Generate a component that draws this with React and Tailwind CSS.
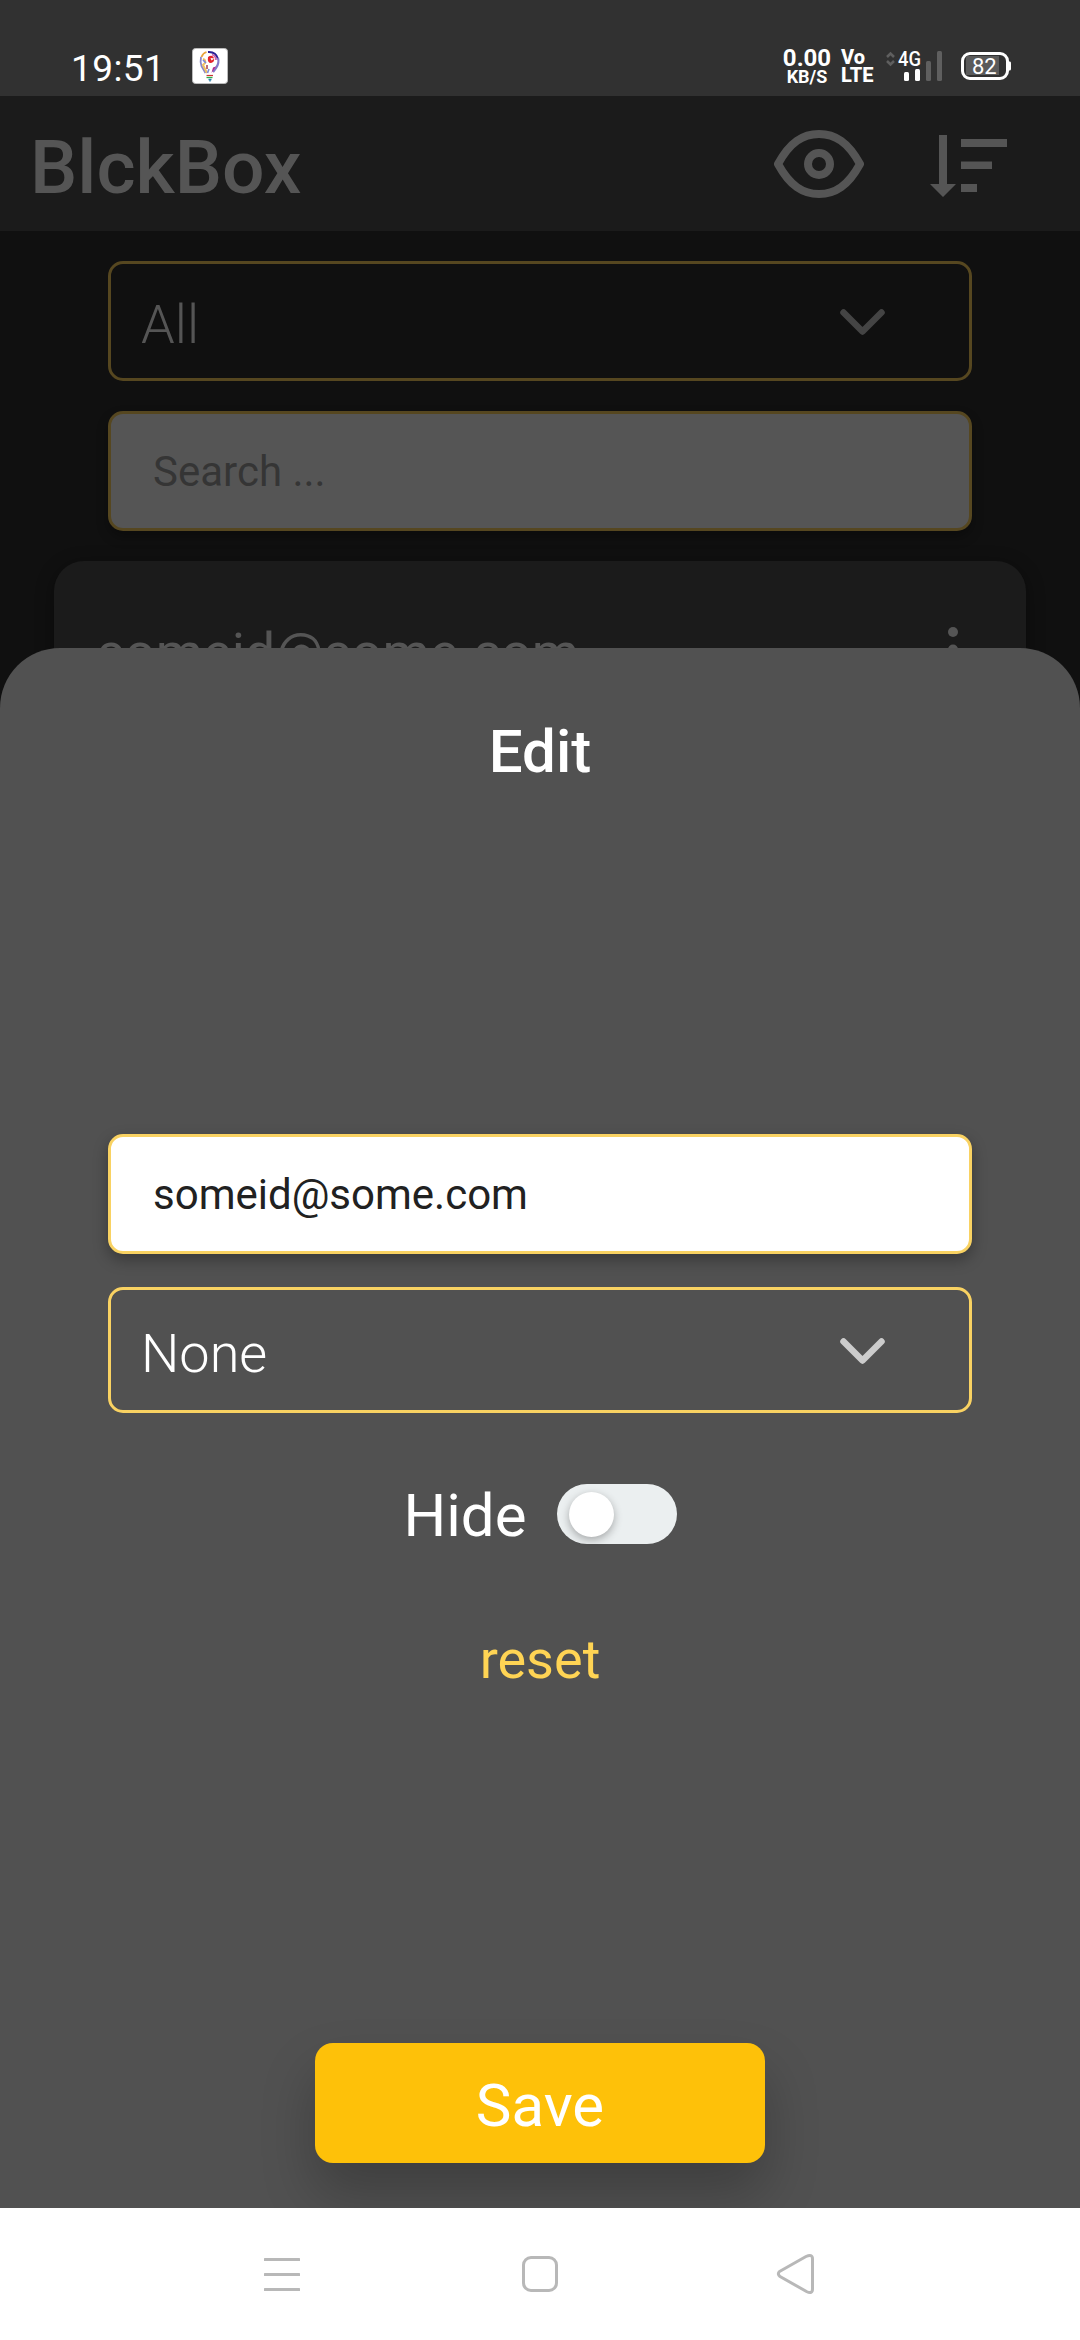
import React from "react";

const selectFont = "text-[54px] font-light leading-none";

function StatusBar() {
  return (
    <div className="flex h-24 w-full shrink-0 items-start bg-[#313131] pt-[48px] text-white">
      <div className="ml-[71px] mt-[2px] w-[96px] whitespace-nowrap text-[37px] leading-[38px] tracking-[0.4px] font-['Roboto']">19:51</div>
      <svg className="ml-[25px] h-9 w-9" viewBox="0 0 36 36" fill="none">
        <rect x="0.5" y="0.5" width="35" height="35" rx="3" fill="#fff" stroke="#bbb" strokeWidth="1" />
        <path d="M9 9Q8 14 9.500 18L13.500 25" stroke="#8a86c8" strokeWidth="1.800" />
        <path d="M9.500 9Q11 5 14.500 4" stroke="#e8a33a" strokeWidth="1.800" />
        <path d="M11 11q3 1 2 4l-2 2 4 8" stroke="#f0c060" strokeWidth="2" />
        <path d="M11 12l3 3" stroke="#7a86d8" strokeWidth="1.600" />
        <path d="M16 4Q24 3.500 26 11" stroke="#2a1f96" strokeWidth="2" />
        <path d="M20 6.500Q24 8 24 12" stroke="#c765b0" strokeWidth="1.800" />
        <path d="M26 10Q27.500 15 24 20L21 24" stroke="#8378c9" strokeWidth="2.200" />
        <path d="M16 9q4-3 6 1 1 4-3 5-4 0-3-6z" fill="#e4242c" />
        <path d="M18.500 10l4 0.500-3 2z" fill="#fff" />
        <path d="M19.500 25l1.500-5.500 3-1z" fill="#b0218c" />
        <path d="M15 17v4" stroke="#a03040" strokeWidth="1.400" />
        <path d="M17 21l-1.500 4" stroke="#7a86d8" strokeWidth="1.600" />
        <path d="M14.500 27.500h6.500" stroke="#c33" strokeWidth="1.200" />
        <path d="M14.500 29.500h6" stroke="#2fae4a" strokeWidth="1.300" />
        <path d="M16.500 31.500h3M18 31.500v2" stroke="#2a7fa8" strokeWidth="1.400" />
      </svg>
      <div className="ml-[550px] flex w-[58px] flex-col items-center font-bold font-['Roboto']">
        <span className="text-[24px] leading-[20px]">0.00</span>
        <span className="text-[18px] leading-[18px]">KB/S</span>
      </div>
      <div className="ml-[5px] flex w-[36px] flex-col font-extrabold font-['Roboto']">
        <span className="text-[20px] leading-[18px]">Vo</span>
        <span className="text-[20px] leading-[18px]">LTE</span>
      </div>
      <svg className="ml-[7px] h-9 w-[62px]" viewBox="884 48 62 36">
        <path d="M887 57l3.500-3.500 3.500 3.500M887 61l3.500 3.500 3.500-3.500" fill="none" stroke="#5f5f5f" strokeWidth="2.500" />
        <text x="898" y="65.500" fill="#fff" fontSize="20" fontWeight="500" fontFamily="Roboto" textLength="23" lengthAdjust="spacingAndGlyphs">4G</text>
        <rect x="904" y="72" width="5" height="9" rx="1.500" fill="#fff" />
        <rect x="915" y="69" width="5" height="12" rx="1.500" fill="#fff" />
        <rect x="926" y="61" width="5" height="20" rx="1.500" fill="#5f5f5f" />
        <rect x="937" y="51" width="5" height="30" rx="1.500" fill="#5f5f5f" />
      </svg>
      <svg className="ml-[14px] h-9 w-[54px]" viewBox="960 48 54 36">
        <rect x="962.500" y="53.500" width="45" height="25" rx="7.500" fill="none" stroke="#fff" strokeWidth="3" />
        <path d="M966 56h33v19h-33z" fill="#5a5a5a" />
        <path d="M1009 61.500h1q1 0 1 2v5q0 2-1 2h-1z" fill="#fff" />
        <text x="972" y="74" fill="#fff" fontSize="22" fontFamily="Roboto">82</text>
      </svg>
    </div>
  );
}

function Header() {
  return (
    <header className="flex h-[135px] shrink-0 items-center bg-[#1b1b1b] text-[#555]">
      <h1 className="ml-[30px] w-[744px] pt-[8px] text-[75px] font-medium leading-none">BlckBox</h1>
      <svg className="h-[68px] w-[90px]" viewBox="774 129 90 68" fill="none" stroke="currentColor" strokeWidth="8">
        <path d="M778 163C790 141 803 133 819 133S848 141 860 163C848 185 835 193 819 193S790 185 778 163Z" strokeLinejoin="round" />
        <circle cx="819" cy="163" r="11" />
      </svg>
      <svg className="ml-[66px] mt-[5px] h-[62px] w-[78px]" viewBox="930 135 78 62" fill="currentColor">
        <path d="M939 135h8v49h9l-13 13-13-13h9zM961 139h46v8h-46zM961 161.500h31v7.500h-31zM961 184h16v8h-16z" />
      </svg>
    </header>
  );
}

function Chevron({ className }) {
  return (
    <svg className={className} viewBox="0 0 45 26" fill="none" stroke="currentColor" strokeWidth="6.500" strokeLinecap="round" strokeLinejoin="round">
      <path d="M3.500 3.500 22.500 22.500 41.500 3.500" />
    </svg>
  );
}

export default function App() {
  return (
    <div className="relative flex h-[2340px] w-[1080px] flex-col overflow-hidden bg-[#101010] font-['Roboto',sans-serif]">
      <StatusBar />
      <Header />
      <main className="flex flex-col px-[54px] pt-[30px]">
        <div className="mx-[54px] flex h-[120px] items-center justify-between rounded-[15px] border-[3px] border-[#564720] pl-[30px] pr-[84px] text-[#555]">
          <span className={`${selectFont} pt-[8px]`}>All</span>
          <Chevron className="mt-[2px] h-[26px] w-[45px] text-[#444]" />
        </div>
        <div className="mx-[54px] mt-[30px] flex h-[120px] items-center rounded-[15px] border-[3px] border-[#564720] bg-[#555] pl-[42px] shadow-[0_6px_12px_rgba(0,0,0,0.3)]">
          <span className="pt-[2px] text-[42px] leading-none text-[#353535]">Search ...</span>
        </div>
        <div className="mt-[30px] flex h-[240px] items-start justify-between rounded-[30px] bg-[#1b1b1b] pl-[43px] pr-[68px] pt-[60px] text-[#555] shadow-[0_4px_18px_rgba(0,0,0,0.4)]">
          <span className="text-[54px] leading-[63px]">someid@some.com</span>
          <svg className="mt-[6px] h-[46px] w-[10px]" viewBox="0 0 10 46" fill="currentColor">
            <circle cx="5" cy="5" r="5" />
            <circle cx="5" cy="22.500" r="5" />
            <circle cx="5" cy="40" r="5" />
          </svg>
        </div>
      </main>

      <section className="absolute inset-x-0 top-[648px] flex h-[1560px] flex-col items-center overflow-hidden rounded-t-[60px] bg-[#515151] text-white">
        <h2 className="mt-[69px] text-[60px] font-medium leading-[70px]">Edit</h2>
        <div className="mt-[347px] flex h-[120px] w-[864px] items-center rounded-[15px] border-[3px] border-[#f9d262] bg-white pl-[42px] shadow-[0_6px_15px_rgba(0,0,0,0.3)]">
          <span className="pt-[2px] text-[42px] leading-none text-[#212121]">someid@some.com</span>
        </div>
        <div className="mt-[33px] flex h-[126px] w-[864px] items-center justify-between rounded-[15px] border-[3px] border-[#f9d262] pl-[30px] pr-[84px]">
          <span className={`${selectFont} pt-[8px]`}>None</span>
          <Chevron className="mt-[2px] h-[26px] w-[45px] text-[#ccc]" />
        </div>
        <div className="mt-[65px] flex h-[72px] items-center gap-[30px]">
          <span className="pt-[4px] text-[60px] leading-[70px]">Hide</span>
          <div className="flex h-[60px] w-[120px] items-center rounded-full bg-[#ebeff0] pl-3">
            <div className="h-[45px] w-[45px] rounded-full bg-white shadow-[0_3px_8px_rgba(0,0,0,0.3)]" />
          </div>
        </div>
        <button className="mt-[78px] text-[54px] leading-[64px] text-[#ffd454]">reset</button>
        <button className="mt-[351px] h-[120px] w-[450px] shrink-0 rounded-[18px] bg-[#fec109] pt-[6px] text-[60px] leading-none shadow-[0_30px_54px_rgba(0,0,0,0.23)]">Save</button>
      </section>

      <nav className="mt-auto flex h-[132px] shrink-0 items-center bg-white text-[#b8b8b8]">
        <svg className="ml-[264px] h-[48px] w-[36px]" viewBox="264 2250 36 48" fill="currentColor">
          <rect x="264" y="2258" width="36" height="3" rx="0.500" />
          <rect x="264" y="2273" width="36" height="3" rx="0.500" />
          <rect x="264" y="2288" width="36" height="3" rx="0.500" />
        </svg>
        <svg className="ml-[222px] h-[48px] w-[36px]" viewBox="522 2250 36 48" fill="none" stroke="currentColor" strokeWidth="3">
          <rect x="523.500" y="2257.500" width="33" height="33" rx="7.500" />
        </svg>
        <svg className="ml-[218px] h-[48px] w-[40px]" viewBox="776 2250 40 48" fill="none" stroke="currentColor" strokeWidth="3">
          <path d="M779.500 2271.500L806 2256.500Q812.500 2253.500 812.500 2259V2289Q812.500 2294.500 806.500 2291.500L780 2276.500Q777 2274 779.500 2271.500Z" strokeLinejoin="round" />
        </svg>
      </nav>
    </div>
  );
}
